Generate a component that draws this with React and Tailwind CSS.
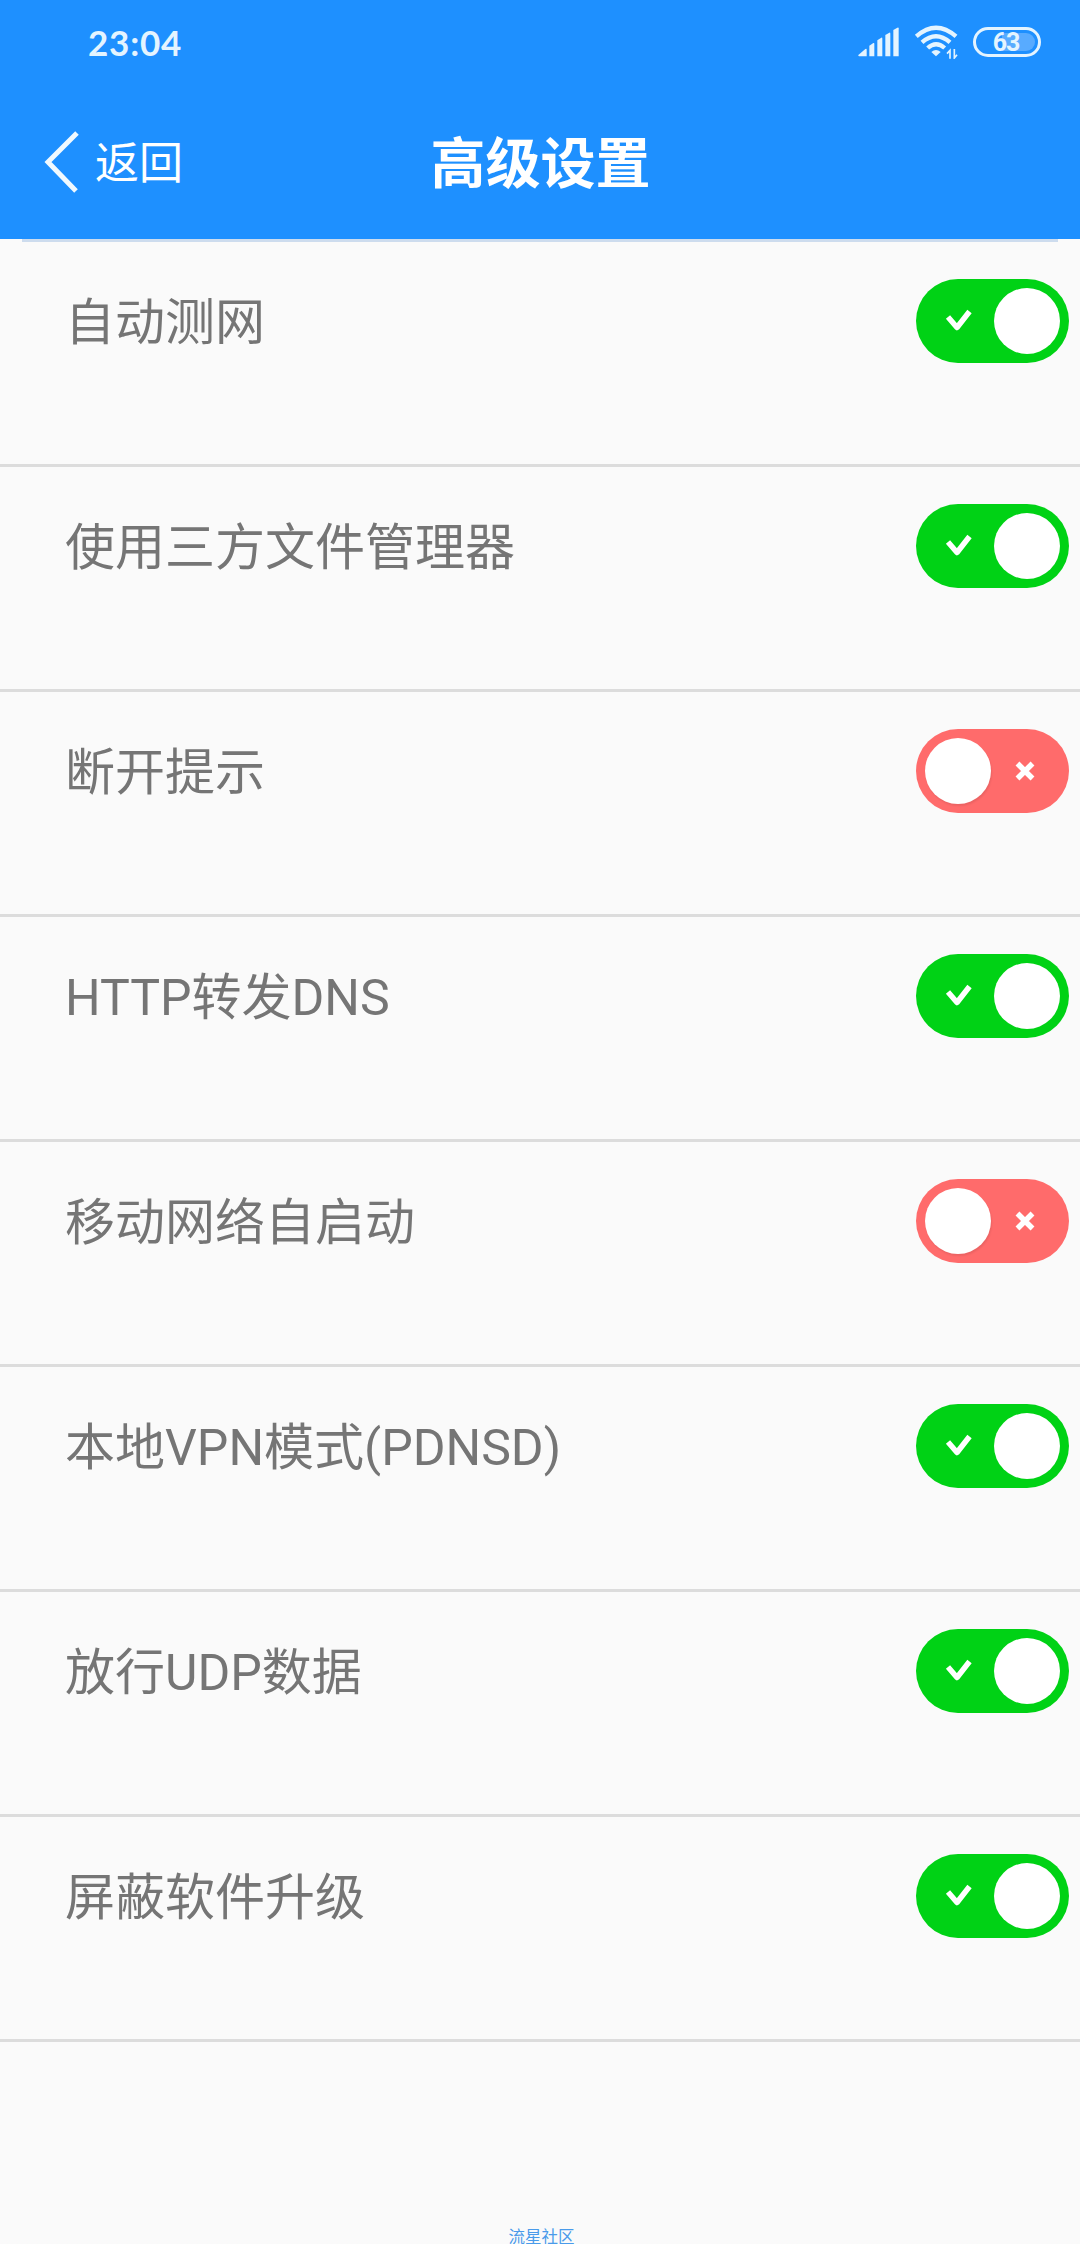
import { useState } from "react";

const initialSettings = [
  { label: "自动测网", on: true },
  { label: "使用三方文件管理器", on: true },
  { label: "断开提示", on: false },
  { label: "HTTP转发DNS", on: true },
  { label: "移动网络自启动", on: false },
  { label: "本地VPN模式(PDNSD)", on: true },
  { label: "放行UDP数据", on: true },
  { label: "屏蔽软件升级", on: true },
];

function StatusBar() {
  return (
    <div className="flex h-[84px] items-center justify-between pl-[88px] pr-[39px] text-[#e4f4ff]">
      <span className="font-['Lato'] text-[35px] leading-[84px] font-bold tracking-[0.8px]">
        23:04
      </span>
      <div className="flex items-center">
        <svg className="h-[30px] w-[42px]" viewBox="56 50 126 90" fill="currentColor">
          <path d="M57 134L78 116Q82 113 82 118V138H60Q56 138 57 134Z" />
          <path d="M90 106L102 98Q105 97 105 100V138H90Z" />
          <path d="M114 90L126 82Q129 81 129 85V138H114Z" />
          <path d="M138 74L150 67Q153 66 153 70V138H138Z" />
          <path d="M162 59L174 52Q178 50 178 54V138H162Z" />
        </svg>
        <svg className="ml-[14px] h-[34px] w-[44px]" viewBox="222 48 132 102" fill="none">
          <g stroke="currentColor" strokeWidth="13">
            <path d="M229 82Q288 30 348 82" />
            <path d="M246 100Q288 63 330 100" />
            <path d="M263 117Q288 94 314 117" />
          </g>
          <path d="M274 129Q288 117 302 129L288 142Z" fill="currentColor" />
          <path
            d="M330 149V124L321 134M343 120V147L351 137"
            stroke="currentColor"
            strokeWidth="5"
          />
        </svg>
        <div className="relative ml-[15px] flex h-[30px] w-[68px] items-center justify-center rounded-full border-[3px] border-current">
          <div className="absolute inset-y-[3px] right-[3px] left-[26px] rounded-r-full bg-[#58abff]" />
          <span className="relative pr-[2px] font-['Roboto'] text-[25px] leading-none font-bold tracking-[-1px]">
            63
          </span>
        </div>
      </div>
    </div>
  );
}

function Toggle({ on, onClick }) {
  return (
    <button
      onClick={onClick}
      className={`flex h-[84px] w-[153px] items-center rounded-full ${
        on ? "bg-[#00d215]" : "flex-row-reverse bg-[#ff6b6b]"
      }`}
    >
      <svg
        className={on ? "ml-[28px] mr-[22px] h-[28px] w-[28px]" : "ml-[20px] mr-[30px] h-[28px] w-[28px]"}
        viewBox="0 0 28 28"
        fill="none"
        stroke="#fff"
        strokeWidth="5.5"
      >
        {on ? (
          <path d="M4 10L13 20.5L25.5 4.5" strokeLinejoin="round" />
        ) : (
          <path d="M6.5 6.5L21.5 21.5M21.5 6.5L6.5 21.5" />
        )}
      </svg>
      <span
        className={`h-[66px] w-[66px] rounded-full bg-white ${
          on ? "" : "shadow-[1px_2px_2px_rgba(0,0,0,0.08)]"
        }`}
      />
    </button>
  );
}

export default function App() {
  const [settings, setSettings] = useState(initialSettings);

  const toggleSetting = (index) => {
    setSettings((prev) =>
      prev.map((item, i) => (i === index ? { ...item, on: !item.on } : item))
    );
  };

  return (
    <div className="flex h-[2244px] w-[1080px] flex-col overflow-hidden bg-[#fafafa] font-['Roboto','Noto_Sans_CJK_SC',sans-serif]">
      <header className="h-[239px] shrink-0 bg-[#1e90ff] text-white">
        <StatusBar />
        <div className="grid h-[155px] grid-cols-3 items-center">
          <button className="flex items-center pt-px pl-[44px]">
            <svg className="h-[64px] w-[36px]" viewBox="0 0 36 64" fill="none">
              <path d="M33 3L4 32L32 61" stroke="#f0f9ff" strokeWidth="5" />
            </svg>
            <span className="ml-[15px] pt-[3px] text-[44px] leading-[64px]">返回</span>
          </button>
          <h1 className="pt-[5px] pl-px text-center text-[55px] leading-[80px] font-bold">高级设置</h1>
        </div>
      </header>

      <div className="mx-[22px] h-[3px] shrink-0 bg-[#cddcee]" />

      <ul>
        {settings.map((item, index) => (
          <li
            key={item.label}
            className="flex h-[225px] items-start justify-between border-b-[3px] border-[#dcdcdc] pt-[37px] pr-[11px] pl-[65px]"
          >
            <span className="pt-[2px] text-[50px] leading-[84px] text-[#757575]">
              {item.label}
            </span>
            <Toggle on={item.on} onClick={() => toggleSetting(index)} />
          </li>
        ))}
      </ul>

      <footer className="mt-auto h-[15px] pl-[3px] text-center text-[16.5px] leading-[17px] text-[#4a9bea]">
        流星社区
      </footer>
    </div>
  );
}
